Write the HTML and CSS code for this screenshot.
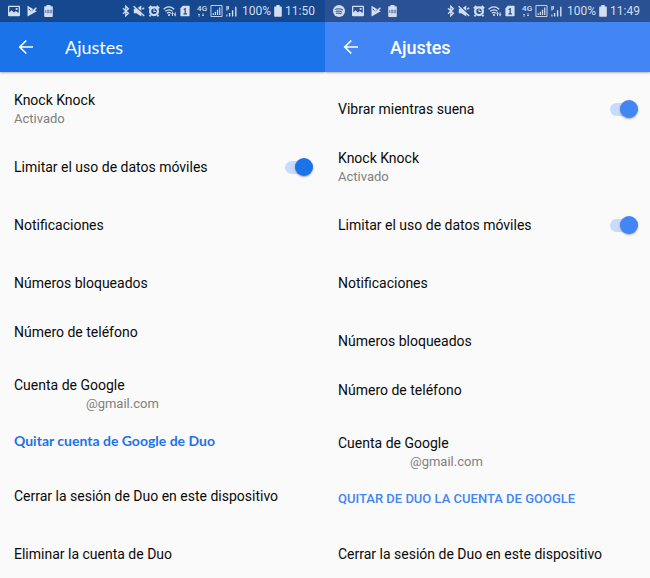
FILE: index.html
```html
<!DOCTYPE html>
<html lang="es">
<head>
	<meta charset="UTF-8">
	<meta name="viewport" content="width=device-width, initial-scale=1">
	<title>Ajustes</title>
	<link rel="stylesheet" href="styles.css">
</head>
<body>
	<!-- status bar icons -->
	<svg class="sprite" aria-hidden="true">
		<symbol id="i-spotify" viewBox="0 0 12 12">
			<circle cx="6" cy="6" r="6" fill="currentColor"/>
			<path d="M2.600 4.200c2.400-.7 4.800-.5 6.800.6M3 6.300c2-.6 4-.4 5.700.6M3.400 8.200c1.600-.4 3.200-.2 4.600.6" fill="none" stroke="#2a5193" stroke-width="1.100" stroke-linecap="round"/>
		</symbol>
		<symbol id="i-image" viewBox="0 0 12 12">
			<path fill="currentColor" fill-rule="evenodd" d="M1 .8h10q1 0 1 1v8.400q0 1-1 1H1q-1 0-1-1V1.800q0-1 1-1zM1.300 2.100v5.400l2.300-2.300 2.400 2.200 1.700-1.400 3 2V2.100zM7.700 3h1.800v1.700H7.700z"/>
		</symbol>
		<symbol id="i-play" viewBox="0 0 10 12">
			<path fill="currentColor" d="M.5.800L9.800 6.200.5 11.400z"/>
			<path d="M1.600 3.800l2.700 2.700L9.500 1.500" fill="none" stroke="#1c4a91" stroke-width="1"/>
			<path d="M2.600 5.800l1.800 1.700L9.400 2.800" fill="none" stroke="currentColor" stroke-width="1.500"/>
		</symbol>
		<symbol id="i-battery100" viewBox="0 0 9 12">
			<path fill="currentColor" d="M2.500 0h4v1.300H8q.8 0 .8.800V11q0 .9-.8.900H1q-.8 0-.8-.9V2.100q0-.8.800-.8h1.500z"/>
			<path d="M1.600 5v3M3.200 5.200h1.500v2.600H3.200zM6.100 5.200h1.500v2.600H6.100z" fill="none" stroke="#2a5193" stroke-width=".6"/>
		</symbol>
		<symbol id="i-bluetooth" viewBox="0 0 8 12">
			<path d="M1 3.300l5.400 5L3.800 10.800V1.200l2.600 2.500L1 8.700" fill="none" stroke="currentColor" stroke-width="1.300"/>
		</symbol>
		<symbol id="i-mute" viewBox="0 0 12 12">
			<path fill="currentColor" d="M.8 3.800h2.600L8.300.6v10.800L3.400 8.200H.8z"/>
			<path d="M1.200.4l10.600 9.600" stroke="#1c4a91" stroke-width="1.200"/>
			<path d="M.6 1.200l10.600 9.800M9.300 4.200l1.900-1.500" fill="none" stroke="currentColor" stroke-width="1.400"/>
		</symbol>
		<symbol id="i-alarm" viewBox="0 0 12 12">
			<path d="M.8 3.400L3.400 1M11.200 3.400L8.600 1M2.600 10L1.500 11.300M9.400 10l1.100 1.300" stroke="currentColor" stroke-width="1.900"/>
			<circle cx="6" cy="6.300" r="3.900" fill="none" stroke="currentColor" stroke-width="2.300"/>
			<path d="M6 4.200v2.300h1.800" fill="none" stroke="currentColor" stroke-width="1.100"/>
		</symbol>
		<symbol id="i-wifi" viewBox="0 0 14 12">
			<path d="M.6 4.200q5.200-4.600 10.600 0M2.300 6.300q3.600-3 7.200 0M4 8.200q1.900-1.500 3.800 0" fill="none" stroke="currentColor" stroke-width="1.300"/>
			<circle cx="6" cy="10" r="1.100" fill="currentColor"/>
			<path fill="currentColor" d="M8.200 9l1.300-2.200L10.800 9H10v2H9V9zM12.100 11.500l-1.300-2.200h.8v-2h1v2h.8z"/>
		</symbol>
		<symbol id="i-sim" viewBox="0 0 10 12">
			<path fill="currentColor" d="M2.800.8H9q.6 0 .6.600v9.200q0 .6-.6.600H1q-.6 0-.6-.6V3.200z"/>
			<path d="M3.700 4.500l1.500-.8v5M3.500 8.800h3.400" fill="none" stroke="#1c4a91" stroke-width="1.200"/>
		</symbol>
		<symbol id="i-updown" viewBox="0 0 8 4">
			<path d="M2 4V1M1 2l1-1 1 1M6 0v3M5 2l1 1 1-1" fill="none" stroke="currentColor" stroke-width=".7"/>
		</symbol>
		<symbol id="i-signalbox" viewBox="0 0 13 13">
			<path d="M.5.500h12v12H.5z" fill="none" stroke="currentColor"/>
			<path d="M3 10.800V9M5.300 10.800V7.400M7.600 10.800V5.200M10 10.800V2.800" stroke="currentColor" stroke-width="1.300"/>
		</symbol>
		<symbol id="i-signal" viewBox="0 0 11 12">
			<path d="M3.600 11.500V8M6.600 11.500V5.300M9.800 11.500V1.800" stroke="currentColor" stroke-width="1.400"/>
			<path d="M.9 1v4.500M2.300 1v3.500M.9 9.500v2" stroke="currentColor" stroke-width="1.100"/>
		</symbol>
		<symbol id="i-battery" viewBox="0 0 8 12">
			<path fill="currentColor" d="M2.300 0h3.400v1.400H7q.8 0 .8.800V11q0 .8-.8.800H1q-.8 0-.8-.8V2.200q0-.8.800-.8h1.300z"/>
		</symbol>
		<symbol id="i-back" viewBox="0 0 16 16">
			<path d="M8.300 1.500L1.800 8l6.500 6.500M1.800 8H15" fill="none" stroke="currentColor" stroke-width="1.700"/>
		</symbol>
	</svg>

	<div class="phones">
		<section class="phone phone-new">
			<div class="status">
				<svg class="w12"><use href="#i-image"/></svg>
				<svg class="w10"><use href="#i-play"/></svg>
				<svg class="w9"><use href="#i-battery100"/></svg>
				<div class="status-right">
					<svg class="w8"><use href="#i-bluetooth"/></svg>
					<svg class="w12"><use href="#i-mute"/></svg>
					<svg class="w12"><use href="#i-alarm"/></svg>
					<svg class="w14"><use href="#i-wifi"/></svg>
					<svg class="w10"><use href="#i-sim"/></svg>
					<span class="net">4G<svg><use href="#i-updown"/></svg></span>
					<svg class="w13"><use href="#i-signalbox"/></svg>
					<svg class="w11"><use href="#i-signal"/></svg>
					<span class="level">100%</span>
					<svg class="w8"><use href="#i-battery"/></svg>
					<span>11:50</span>
				</div>
			</div>
			<header class="bar">
				<button class="back" aria-label="Atrás"><svg><use href="#i-back"/></svg></button>
				<h1>Ajustes</h1>
			</header>
			<div class="list">
				<a class="row" href="#">Knock Knock<small>Activado</small></a>
				<div class="row row-switch">
					<label for="data1">Limitar el uso de datos móviles</label>
					<input class="switch" type="checkbox" id="data1" checked>
				</div>
				<a class="row" href="#">Notificaciones</a>
				<a class="row" href="#">Números bloqueados</a>
				<a class="row row-phone" href="#">Número de teléfono</a>
				<a class="row" href="#">Cuenta de Google<small class="mail">@gmail.com</small></a>
				<button class="remove">Quitar cuenta de Google de Duo</button>
				<a class="row" href="#">Cerrar la sesión de Duo en este dispositivo</a>
				<a class="row" href="#">Eliminar la cuenta de Duo</a>
			</div>
		</section>

		<section class="phone phone-old">
			<div class="status">
				<svg class="w12"><use href="#i-spotify"/></svg>
				<svg class="w12"><use href="#i-image"/></svg>
				<svg class="w10"><use href="#i-play"/></svg>
				<svg class="w9"><use href="#i-battery100"/></svg>
				<div class="status-right">
					<svg class="w8"><use href="#i-bluetooth"/></svg>
					<svg class="w12"><use href="#i-mute"/></svg>
					<svg class="w12"><use href="#i-alarm"/></svg>
					<svg class="w14"><use href="#i-wifi"/></svg>
					<svg class="w10"><use href="#i-sim"/></svg>
					<span class="net">4G<svg><use href="#i-updown"/></svg></span>
					<svg class="w13"><use href="#i-signalbox"/></svg>
					<svg class="w11"><use href="#i-signal"/></svg>
					<span class="level">100%</span>
					<svg class="w8"><use href="#i-battery"/></svg>
					<span>11:49</span>
				</div>
			</div>
			<header class="bar">
				<button class="back" aria-label="Atrás"><svg><use href="#i-back"/></svg></button>
				<h1>Ajustes</h1>
			</header>
			<div class="list">
				<div class="row row-switch">
					<label for="vibrate">Vibrar mientras suena</label>
					<input class="switch" type="checkbox" id="vibrate" checked>
				</div>
				<a class="row" href="#">Knock Knock<small>Activado</small></a>
				<div class="row row-switch">
					<label for="data2">Limitar el uso de datos móviles</label>
					<input class="switch" type="checkbox" id="data2" checked>
				</div>
				<a class="row" href="#">Notificaciones</a>
				<a class="row" href="#">Números bloqueados</a>
				<a class="row row-phone" href="#">Número de teléfono</a>
				<a class="row" href="#">Cuenta de Google<small class="mail">@gmail.com</small></a>
				<button class="remove">QUITAR DE DUO LA CUENTA DE GOOGLE</button>
				<a class="row" href="#">Cerrar la sesión de Duo en este dispositivo</a>
			</div>
		</section>
	</div>
</body>
</html>
```
FILE: styles.css
```css
*{padding:0;margin:0;box-sizing:border-box;}
body{
	font-family: Roboto, "Liberation Sans", sans-serif;
	font-size: 14px;
	color:#0a0a0a;
	background:#fafafa;
}
.sprite{display: none;}
.phones{
	display: flex;
	height: 100vh;
}
.phone{
	flex:1;
	display: flex;
	flex-direction: column;
	min-width: 0;
	overflow: hidden;
}
.phone-new{
	--main:#1a73e8;
	--dark:#15488f;
	--edge:14px;
}
.phone-old{
	--main:#4285f4;
	--dark:#2a5193;
	--edge:13px;
}

/* status bar */
.status{
	flex:none;
	display: flex;
	align-items: center;
	gap:7px;
	height:22px;
	padding:0 10px 0 8px;
	background:var(--dark);
	color:#d3def0;
	font-size: 12px;
	line-height: 22px;
}
.status svg{
	flex:none;
	height:12px;
}
.status-right{
	display: flex;
	align-items: center;
	gap:3px;
	margin-left: auto;
}
.w8{width:8px;}
.w9{width:9px;}
.w10{width:10px;}
.w11{width:11px;}
.w12{width:12px;}
.w13{width:13px;}
.w14{width:14px;}
.net{
	width:10px;
	margin-left: 4px;
	font-size: 8px;
	font-weight: 500;
	line-height: 8px;
}
.level{margin-left: 2px;}
.status .net svg{
	display: block;
	width:8px;
	height:4px;
}

/* app bar */
.bar{
	flex:none;
	display: flex;
	align-items: center;
	height:50px;
	padding-left: 18px;
	background:var(--main);
	color:#fff;
	box-shadow: 0 1px 2px rgba(0,0,0,.3);
}
.back{
	width:16px;
	height:16px;
	border:none;
	background:none;
	color:#fff;
}
.back svg{
	display: block;
	width:16px;
	height:16px;
}
.bar h1{
	margin-left: 31px;
	font-size: 18px;
	font-weight: 500;
}
.phone-new h1{
	font-family: Lato, Roboto, sans-serif;
	font-weight: 400;
}

/* settings */
.list{
	flex:1;
	padding-top: 8px;
	overflow-y: auto;
	scrollbar-width: none;
}
.row{
	display: flex;
	flex-direction: column;
	justify-content: center;
	height:58px;
	padding:0 12px 0 var(--edge);
	line-height: 20px;
	color:#0a0a0a;
	text-decoration: none;
}
.row small{
	font-size: 13px;
	line-height: 18px;
	color:#808080;
}
.row .mail{padding-left: 72px;}
.row-switch{
	flex-direction: row;
	align-items: center;
	justify-content: space-between;
}
.row-phone{
	height:40px;
	margin-bottom: 13px;
}
.remove{
	display: block;
	height:34px;
	margin-bottom: 10px;
	padding:0 var(--edge);
	border:none;
	background:none;
	color:var(--main);
	font-family: inherit;
	font-size: 13px;
	font-weight: 500;
}
.phone-new .remove{
	font-family: Lato, Roboto, sans-serif;
	font-size: 14px;
	font-weight: 700;
}
.switch{
	appearance: none;
	display: flex;
	align-items: center;
	width:28px;
	height:13px;
	border-radius: 7px;
	background:#c6dcfa;
	cursor: pointer;
}
.switch::before{
	content:"";
	flex:none;
	width:18px;
	height:18px;
	border-radius: 50%;
	background:#fff;
	box-shadow: 0 1px 2px rgba(0,0,0,.35);
}
.switch:checked::before{
	margin-left: auto;
	background:var(--main);
}
```
